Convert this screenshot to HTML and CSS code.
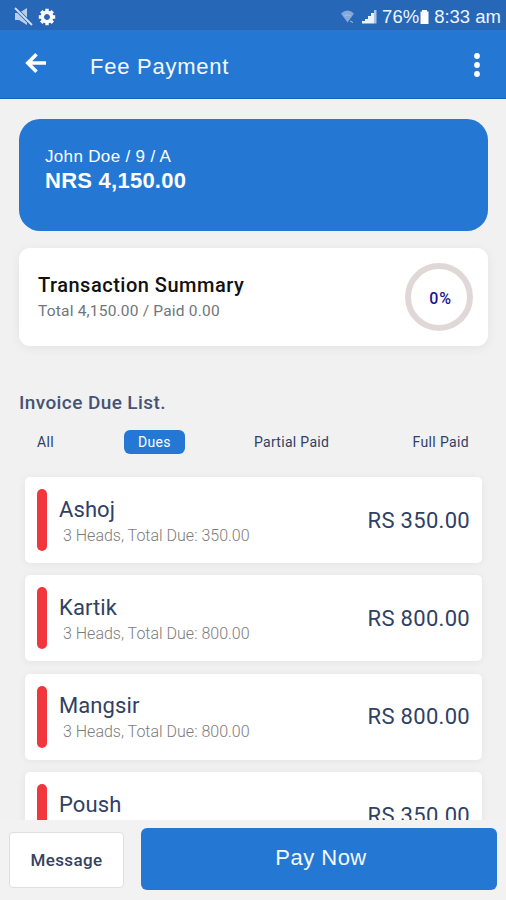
FILE: index.html
```html
<!DOCTYPE html>
<html lang="en">
<head>
<meta charset="utf-8">
<title>Fee Payment</title>
<link rel="stylesheet" href="styles.css">
</head>
<body>
<div class="screen">
  <div class="status">
    <svg class="mute" width="19" height="19" viewBox="0 0 19 19"><path fill="#b9cdea" d="M1 6h4l8-5v17l-8-5H1z"/><path stroke="#2667b7" stroke-width="3.600" d="M1 1l17 17"/><path stroke="#d3e1f4" stroke-width="1.800" d="M1 1l17 17"/></svg>
    <svg class="gear" width="18" height="18" viewBox="-9 -9 18 18"><circle r="4.700" fill="none" stroke="#fff" stroke-width="3.400"/><g stroke="#fff" stroke-width="3.400"><path d="M0-8.200V-5M0 5V8.200M-8.200 0H-5M5 0H8.200M-5.800-5.800L-4-4M4 4L5.800 5.800M-5.800 5.800L-4 4M4-4L5.800-5.800"/></g></svg>
    <span class="grow"></span>
    <svg class="wifi" width="14" height="14" viewBox="0 0 14 14"><path fill="#86a9da" d="M0 3.500Q6.500-2.500 13 3.500L6.500 12.500z"/><path fill="none" stroke="#a9c3e8" d="M3.500 6Q6.500 3.500 9.500 6M9 11l3 1.500"/></svg>
    <svg class="signal" width="16" height="15" viewBox="0 0 16 15"><path fill="#eaf2fd" d="M0 12h3v2.500H0zM3 10h3v4.500H3zM6 7h3v7.500H6zM9 4h3v10.500H9z"/><path fill="#a9c3e6" d="M12 1h2.500v13.500H12z"/></svg>
    <span class="pct">76%</span>
    <svg class="battery" width="9" height="14" viewBox="0 0 9 14"><path fill="#fff" d="M2 0h5v1.500h1.500v12.500H.5V1.500H2z"/></svg>
    <span class="clock">8:33 am</span>
  </div>
  <header class="appbar">
    <svg class="back" width="22" height="20" viewBox="0 0 22 20"><path fill="none" stroke="#fff" stroke-width="3.600" d="M21 10H3M11.500 1.300L2.800 10L11.500 18.700"/></svg>
    <h1>Fee Payment</h1>
    <svg class="more" width="6" height="24" viewBox="0 0 6 24"><g fill="#fff"><circle cx="3" cy="3" r="2.900"/><circle cx="3" cy="12" r="2.900"/><circle cx="3" cy="21" r="2.900"/></g></svg>
  </header>
  <main>
    <section class="balance"><div class="student">John Doe / 9 / A</div><div class="amount">NRS 4,150.00</div></section>
    <section class="summary">
      <div><h2>Transaction Summary</h2><p>Total 4,150.00 / Paid 0.00</p></div>
      <div class="ring">0%</div>
    </section>
    <h3>Invoice Due List.</h3>
    <nav class="tabs"><span>All</span><span class="active">Dues</span><span class="partial">Partial Paid</span><span class="full">Full Paid</span></nav>
    <div class="list">
      <article class="item"><i class="bar"></i><div class="info"><h4>Ashoj</h4><p>3 Heads, Total Due: 350.00</p></div><b>RS 350.00</b></article>
      <article class="item"><i class="bar"></i><div class="info"><h4>Kartik</h4><p>3 Heads, Total Due: 800.00</p></div><b>RS 800.00</b></article>
      <article class="item"><i class="bar"></i><div class="info"><h4>Mangsir</h4><p>3 Heads, Total Due: 800.00</p></div><b>RS 800.00</b></article>
      <article class="item"><i class="bar"></i><div class="info"><h4>Poush</h4><p>3 Heads, Total Due: 350.00</p></div><b>RS 350.00</b></article>
    </div>
  </main>
  <footer><button class="message">Message</button><button class="pay">Pay Now</button></footer>
</div>
</body>
</html>
```
FILE: styles.css
```css
* { box-sizing: border-box; }
body { margin: 0; font-family: Roboto, sans-serif; color: #2f4164; background: #f1f1f1; }
h1, h2, h3, h4, p { margin: 0; white-space: nowrap; }
svg { display: block; flex: none; }
.screen { width: 506px; height: 900px; display: flex; flex-direction: column; overflow: hidden; }
.status { height: 30px; flex: none; display: flex; align-items: center; padding: 3px 5px 0 14px; background: #2667b7; color: #eef5ff; font: 18.5px "Liberation Sans", sans-serif; white-space: nowrap; }
.gear { margin-left: 5px; }
.grow { flex: 1; }
.wifi { margin-right: 2px; }
.signal { margin: 0 4px 0 5px; }
.battery { margin: 0 5px 0 1px; }
.appbar { height: 69px; flex: none; display: flex; align-items: center; padding: 0 26px 0 25px; background: #2478d3; border-bottom: 1px solid #1464bd; color: #f4f9ff; }
.back { margin-bottom: 3px; }
.more { margin-top: 2px; }
h1 { flex: 1; margin: 5px 0 0 43px; font: 22px "Liberation Sans", sans-serif; letter-spacing: .75px; }
main { flex: 1; min-height: 0; overflow: hidden; padding: 20px 18px 0 19px; }
.balance { height: 112px; border-radius: 21px; background: #2478d3; color: #fff; padding: 27px 26px; font-family: "Liberation Sans", sans-serif; }
.student { font-size: 17px; line-height: 21px; letter-spacing: .33px; }
.amount { font-size: 22px; line-height: 27px; font-weight: 700; letter-spacing: .25px; }
.summary { height: 98px; margin-top: 17px; border-radius: 11px; background: #fff; box-shadow: 0 2px 12px rgba(0,0,0,.06); display: flex; align-items: center; justify-content: space-between; padding: 0 15px 0 19px; }
h2 { margin-top: 2px; font-size: 20px; line-height: 26px; font-weight: 500; color: #111; letter-spacing: .5px; }
.summary p { font-size: 15.5px; line-height: 26px; color: #6f757d; letter-spacing: .2px; }
.ring { width: 68px; height: 68px; border: 6px solid #e0d8d8; border-radius: 50%; display: flex; align-items: center; justify-content: center; color: #24128f; font-size: 16px; font-weight: 500; letter-spacing: .9px; padding: 2px 0 0 3px; }
h3 { margin-top: 45px; font-size: 19px; line-height: 24px; font-weight: 500; color: #465373; letter-spacing: .4px; }
.tabs { display: grid; grid-template-columns: 87px 130px 1fr auto; align-items: center; height: 24px; margin: 15px 0 23px; padding: 0 19px 0 18px; font-size: 14px; letter-spacing: .3px; }
.full { letter-spacing: .35px; }
.active { width: 61px; height: 24px; line-height: 24px; text-align: center; border-radius: 6px; background: #2478d3; color: #fff; }
.list { display: grid; gap: 12.400px; padding: 0 6px; }
.item { height: 86px; border-radius: 5px; background: #fff; box-shadow: 0 1px 8px rgba(0,0,0,.06); display: flex; align-items: center; padding: 0 12px; }
.bar { width: 10px; height: 62px; border-radius: 5px; background: #f1363d; }
.info { flex: 1; padding: 3px 0 0 12px; }
h4 { font-size: 22px; line-height: 28px; font-weight: 400; letter-spacing: .1px; }
.info p { font-size: 16px; line-height: 24px; padding-left: 4px; color: #7c7c7c; font-weight: 300; }
.item b { font-size: 22px; font-weight: 400; white-space: nowrap; letter-spacing: .3px; }
footer { flex: none; height: 80px; background: #f2f2f2; display: flex; align-items: flex-start; padding: 8px 9px 0; }
button { padding: 0; font-family: Roboto, sans-serif; }
.message { width: 115px; height: 56px; margin: 4px 17px 0 0; border: 1px solid #dedede; border-radius: 4px; background: #fff; color: #36435f; font-size: 17px; font-weight: 500; letter-spacing: .4px; }
.pay { flex: 1; height: 62px; border: 0; border-radius: 6px; background: #2478d3; color: #f4f9ff; font: 22px "Liberation Sans", sans-serif; letter-spacing: .5px; padding: 0 0 2px 4px; }
```
